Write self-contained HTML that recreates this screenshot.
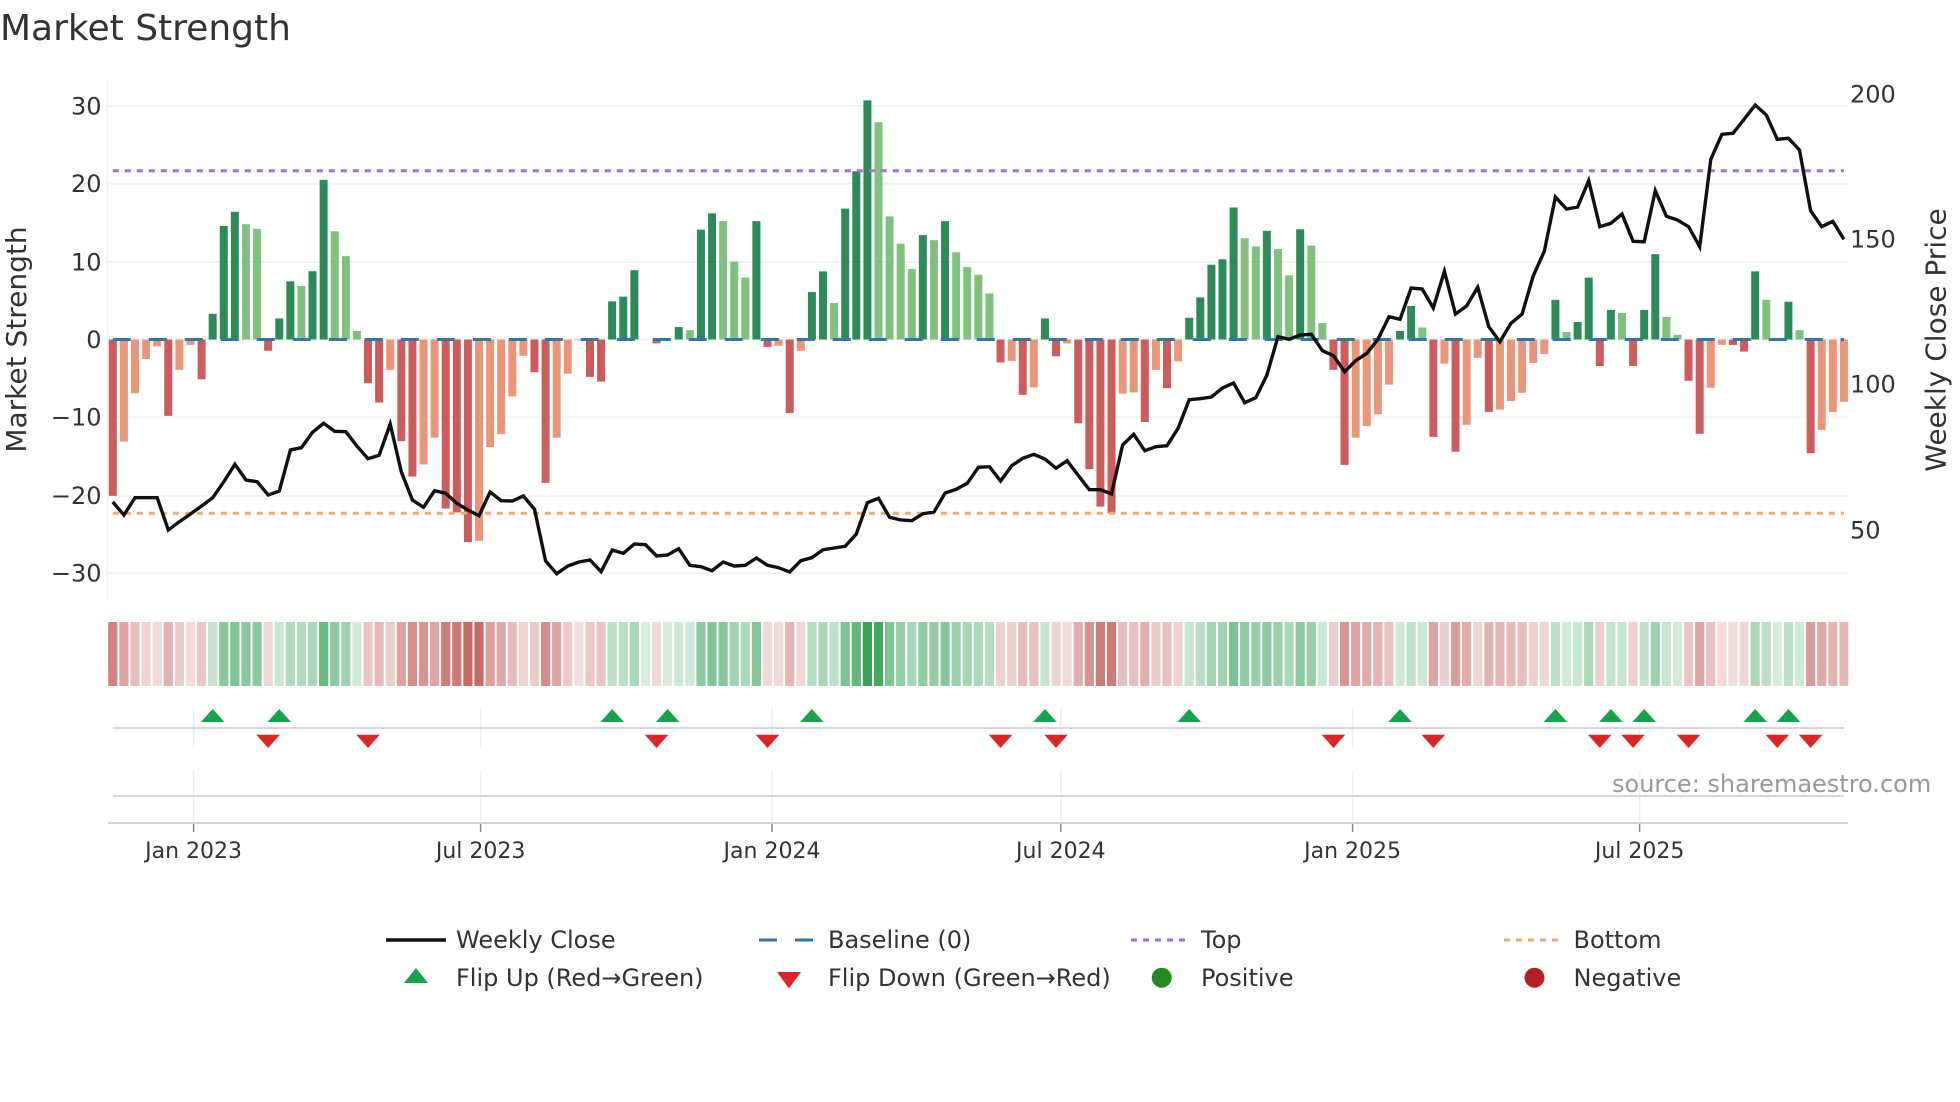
<!DOCTYPE html>
<html lang="en">
<head>
<meta charset="utf-8">
<title>Market Strength</title>
<style>
html,body{margin:0;padding:0;background:#fff;width:1960px;height:1102px;overflow:hidden}
svg{display:block}
text{font-family:"DejaVu Sans","Liberation Sans",sans-serif;fill:#333}
.yt{font-size:24px;text-anchor:end}
.yr{font-size:24px}
.xt{font-size:22px;text-anchor:middle}
.lg{font-size:24px}
.at{font-size:28px;text-anchor:middle}
</style>
</head>
<body>
<svg id="c" width="1960" height="1102" viewBox="0 0 1960 1102" xmlns="http://www.w3.org/2000/svg">
  <rect width="1960" height="1102" fill="#fff"/>
  <g id="grid" stroke="#f2f3f5" stroke-width="2">
    <line x1="107.5" y1="80" x2="107.5" y2="600"/>
    <line x1="108" y1="106" x2="1848" y2="106"/>
    <line x1="108" y1="183.7" x2="1848" y2="183.7"/>
    <line x1="108" y1="262" x2="1848" y2="262"/>
    <line x1="108" y1="339.5" x2="1848" y2="339.5"/>
    <line x1="108" y1="417.3" x2="1848" y2="417.3"/>
    <line x1="108" y1="495.7" x2="1848" y2="495.7"/>
    <line x1="108" y1="573.3" x2="1848" y2="573.3"/>
  </g>
  <g id="bars"></g>
  <line x1="112.8" y1="170.7" x2="1844" y2="170.7" stroke="#a36ee0" stroke-width="3" stroke-dasharray="6 6"/>
  <line x1="112.8" y1="513.3" x2="1844" y2="513.3" stroke="#f4a968" stroke-width="3" stroke-dasharray="6 6"/>
  <line x1="112.8" y1="339.5" x2="1844" y2="339.5" stroke="#2a78ac" stroke-width="3" stroke-dasharray="18 18"/>
  <polyline id="price" fill="none" stroke="#111" stroke-width="3.4" stroke-linejoin="miter"/>
  <g id="strip"></g>
  <g id="vg" stroke="#eceef3" stroke-width="1.5"></g>
  <line x1="112.8" y1="728" x2="1844" y2="728" stroke="#d4d6da" stroke-width="2"/>
  <line x1="112.8" y1="796" x2="1844" y2="796" stroke="#d4d6da" stroke-width="2"/>
  <line x1="108" y1="823" x2="1848" y2="823" stroke="#d0d2d6" stroke-width="2"/>
  <g id="marks"></g>

  <text x="0" y="40" style="font-size:36px">Market Strength</text>

  <text class="yt" x="101.5" y="114.3">30</text>
  <text class="yt" x="101.5" y="192">20</text>
  <text class="yt" x="101.5" y="270.3">10</text>
  <text class="yt" x="101.5" y="347.8">0</text>
  <text class="yt" x="101.5" y="425.6">−10</text>
  <text class="yt" x="101.5" y="504">−20</text>
  <text class="yt" x="101.5" y="581.6">−30</text>

  <text class="yr" x="1850" y="102.7">200</text>
  <text class="yr" x="1850" y="247.7">150</text>
  <text class="yr" x="1850" y="392.7">100</text>
  <text class="yr" x="1850" y="538.3">50</text>

  <text class="at" transform="translate(26 339.5) rotate(-90)">Market Strength</text>
  <text class="at" transform="translate(1945.5 340) rotate(-90)">Weekly Close Price</text>

  <text class="xt" x="193.6" y="858">Jan 2023</text>
  <text class="xt" x="480.6" y="858">Jul 2023</text>
  <text class="xt" x="772" y="858">Jan 2024</text>
  <text class="xt" x="1060.8" y="858">Jul 2024</text>
  <text class="xt" x="1352.6" y="858">Jan 2025</text>
  <text class="xt" x="1639.6" y="858">Jul 2025</text>

  <text x="1612" y="792" style="font-size:24px;fill:#999">source: sharemaestro.com</text>

  <line x1="386" y1="940" x2="446" y2="940" stroke="#111" stroke-width="3.4"/>
  <text class="lg" x="456" y="948">Weekly Close</text>
  <line x1="759" y1="940" x2="813" y2="940" stroke="#2a78ac" stroke-width="3" stroke-dasharray="18 18"/>
  <text class="lg" x="828" y="948">Baseline (0)</text>
  <line x1="1131" y1="940" x2="1186" y2="940" stroke="#a36ee0" stroke-width="3" stroke-dasharray="6 6"/>
  <text class="lg" x="1201" y="948">Top</text>
  <line x1="1504" y1="940" x2="1559" y2="940" stroke="#f4a968" stroke-width="3" stroke-dasharray="6 6"/>
  <text class="lg" x="1573.5" y="948">Bottom</text>

  <polygon points="404,983 428,983 416,968" fill="#16a34a"/>
  <text class="lg" x="456" y="986">Flip Up (Red→Green)</text>
  <polygon points="777,972 801,972 789,988.5" fill="#dc2626"/>
  <text class="lg" x="828" y="986">Flip Down (Green→Red)</text>
  <circle cx="1161.7" cy="977.7" r="10" fill="#228b22"/>
  <text class="lg" x="1201" y="986">Positive</text>
  <circle cx="1534.5" cy="977.7" r="10" fill="#b22222"/>
  <text class="lg" x="1573.5" y="986">Negative</text>
</svg>
<script>
(function(){
var V=[-20.07,-13.1,-6.9,-2.5,-0.9,-9.8,-3.9,-0.7,-5.1,3.3,14.57,16.4,14.8,14.2,-1.45,2.7,7.47,6.87,8.77,20.5,13.9,10.7,1.1,-5.6,-8.1,-3.9,-13.05,-17.6,-16.05,-12.6,-21.7,-22.2,-26,-25.85,-13.8,-12.15,-7.3,-2.1,-4.2,-18.4,-12.6,-4.4,-0.1,-4.8,-5.4,4.9,5.5,8.9,0,-0.5,0,1.6,1.2,14.1,16.2,15.2,10,7.95,15.2,-0.95,-0.8,-9.45,-1.45,6.1,8.75,4.7,16.8,21.6,30.7,27.9,15.8,12.3,9.05,13.4,12.75,15.2,11.2,9.3,8.3,5.9,-2.95,-2.75,-7.1,-6.15,2.7,-2.15,-0.5,-10.75,-16.65,-21.45,-22.3,-6.95,-6.8,-10.6,-3.9,-6.25,-2.8,2.8,5.4,9.6,10.3,16.95,13,11.95,13.95,11.6,8.25,14.15,12.05,2.1,-3.9,-16.1,-12.6,-11.1,-9.6,-5.8,1.1,4.3,1.55,-12.5,-3.1,-14.4,-10.95,-2.35,-9.3,-9,-7.9,-6.85,-3,-1.85,5.1,0.95,2.25,7.95,-3.4,3.8,3.4,-3.4,3.8,10.95,2.9,0.6,-5.3,-12.1,-6.2,-0.7,-0.7,-1.55,8.75,5.1,0,4.85,1.2,-14.6,-11.6,-9.3,-8];
var P=[502,515,497.7,497.7,497.7,530,521.7,514,506,497.7,481.7,464.3,480,481.7,495,491,450,447.7,432.3,423.3,431.3,431.7,446,458.7,455.3,424,471.7,500,507.3,490.7,493.3,503.3,510,515.7,492,500.7,501,496,509.3,561,573.7,566,562,560,571.7,550,553.3,544,544.7,556,555,548.7,565.3,566.7,570.7,562,566,565.3,558,565.3,567.7,572,560.7,557.7,549.7,548,546.3,534,502.7,498.3,517.3,520,520.7,513.7,512,493,489.3,483.3,467.3,466.7,481,465.7,458.3,454.3,459,468.3,460.7,475.3,489.7,489.7,494,445,434.3,450.7,446.7,445.7,428.3,399.7,398.7,397,388,383,402.7,397.7,375,336.7,339.3,335,334.3,350.7,355.7,371.7,360.7,353.3,339.3,316.7,319.3,288,289,308,271.3,314,306,287.3,326.7,341.7,323.3,314,276,251.3,197,209,207,180.7,226.7,223.3,214,241.3,241.7,190.7,216.3,220,226.7,246.7,159.3,134.3,133.3,119.3,105,115,139.3,138.3,150,210.7,226.7,221.3,239.3];
var UP=[9,15,45,50,63,84,97,116,130,135,138,148,151];
var DN=[14,23,49,59,80,85,110,119,134,137,142,150,153];
var TX=[193.6,480.6,772,1060.8,1352.6,1639.6];
var X0=112.8,DX=11.097,Y0=339.5,S=7.79;
function X(i){return X0+DX*i}
function r(a,b,t){return Math.round(a+(b-a)*t)}
var b='',s='',pts=[],i;
for(i=0;i<V.length;i++){
  var v=V[i],x=X(i),c;
  if(v>0){c=(i>0&&v<V[i-1])?'#81c07f':'#2e8b57'}
  else{c=(i>0&&v>V[i-1])?'#e9967a':'#cd5c5c'}
  if(v!==0){
    var h=Math.abs(v)*S,y=v>0?Y0-h:Y0;
    b+='<rect x="'+(x-4).toFixed(2)+'" y="'+y.toFixed(2)+'" width="8" height="'+h.toFixed(2)+'" fill="'+c+'"/>';
  }
  var col;
  if(v>=0){var t=v/30.7;col='rgb('+r(214,55,t)+','+r(237,160,t)+','+r(222,85,t)+')'}
  else{var t2=-v/26;col='rgb('+r(242,198,t2)+','+r(222,106,t2)+','+r(222,100,t2)+')'}
  var l=Math.max(108,x-4.6),rr=Math.min(1848.4,x+4.6);
  s+='<rect x="'+l.toFixed(2)+'" y="622" width="'+(rr-l).toFixed(2)+'" height="64" fill="'+col+'"/>';
  pts.push(x.toFixed(1)+','+P[i]);
}
document.getElementById('bars').innerHTML=b;
document.getElementById('strip').innerHTML=s;
document.getElementById('price').setAttribute('points',pts.join(' '));
var g='';
TX.forEach(function(x){
  g+='<line x1="'+x+'" y1="708" x2="'+x+'" y2="748"/><line x1="'+x+'" y1="770" x2="'+x+'" y2="823"/><line x1="'+x+'" y1="823" x2="'+x+'" y2="832" stroke="#888"/>';
});
document.getElementById('vg').innerHTML=g;
var m='';
UP.forEach(function(i){var x=X(i);m+='<polygon points="'+(x-11.8)+',722 '+(x+11.8)+',722 '+x+',709" fill="#16a34a"/>'});
DN.forEach(function(i){var x=X(i);m+='<polygon points="'+(x-11.8)+',734.7 '+(x+11.8)+',734.7 '+x+',748" fill="#dc2626"/>'});
document.getElementById('marks').innerHTML=m;
})();
</script>
</body>
</html>
